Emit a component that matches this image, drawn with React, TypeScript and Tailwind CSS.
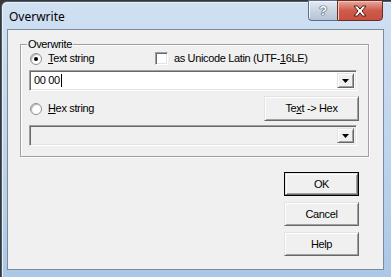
import type { ReactNode } from "react";

const raised =
  "border border-t-[#e3e3e3] border-l-[#e3e3e3] border-b-[#696969] border-r-[#696969] shadow-[inset_1px_1px_0_#fff,inset_-1px_-1px_0_#a0a0a0]";
const sunken =
  "border border-t-[#a0a0a0] border-l-[#a0a0a0] border-b-[#fff] border-r-[#fff] shadow-[inset_1px_1px_0_#696969,inset_-1px_-1px_0_#e3e3e3]";

function Arrow() {
  return (
    <div className={`flex h-full w-[17px] items-center justify-center bg-[#f0f0f0] ${raised}`}>
      <svg width="7" height="4" viewBox="0 0 7 4">
        <path d="M0 0h7L3.5 4z" fill="#000" />
      </svg>
    </div>
  );
}

function Combo({ disabled, children }: { disabled?: boolean; children?: ReactNode }) {
  return (
    <div
      className={`flex h-[21px] w-[328px] items-stretch p-[2px] ${sunken} ${disabled ? "bg-[#f0f0f0]" : "bg-white"}`}
    >
      <div className="flex flex-1 items-center pl-[2px]">{children}</div>
      <Arrow />
    </div>
  );
}

function Radio({ checked }: { checked?: boolean }) {
  return (
    <div className="flex h-[12px] w-[12px] items-center justify-center rounded-full border border-[#8e8f8f] bg-white shadow-[inset_1px_1px_1px_#b5b5b5]">
      {checked && <div className="h-[4px] w-[4px] rounded-full bg-black" />}
    </div>
  );
}

function Button({ children, def }: { children: ReactNode; def?: boolean }) {
  return (
    <div className={`h-[24px] w-[75px] ${def ? "border border-black" : ""}`}>
      <div className={`flex h-full w-full items-center justify-center bg-[#f0f0f0] ${raised}`}>{children}</div>
    </div>
  );
}

export default function App() {
  return (
    <div
      className="relative h-[277px] w-[391px] overflow-hidden bg-[#3a3632] text-[11px] leading-[13px] tracking-[-0.35px] text-black"
      style={{ fontFamily: '"Liberation Sans", Arial, sans-serif' }}
    >
      <div className="relative ml-[1px] mt-[1px] h-[290px] w-[400px] rounded-tl-[6px] border border-[#4d5c6c] bg-gradient-to-b from-[#cfe0f2] via-[#bed5ed] to-[#a9c6e6] shadow-[inset_1px_1px_0_#e8f1fa]">
        {/* title bar */}
        <div className="flex h-[27px] items-center pl-[7px] pt-[2px]">
          <span
            className="text-[12px] tracking-normal text-black"
            style={{ fontFamily: '"Noto Sans", "Open Sans", sans-serif' }}
          >
            Overwrite
          </span>
        </div>

        {/* caption buttons */}
        <div className="absolute left-[306px] top-[-2px] flex h-[21px]">
          <div className="flex w-[29px] items-center justify-center rounded-bl-[4px] border border-r-0 border-[#5d6f86] bg-gradient-to-b from-[#e4ebf3] via-[#c9d5e2] to-[#b3c2d3] shadow-[inset_1px_1px_0_#f3f7fb]">
            <span
              className="text-[13px] font-bold leading-none text-white"
              style={{
                fontFamily: '"Liberation Sans", sans-serif',
                textShadow: "0 0 1px #2c3b4d, 0 0 1px #2c3b4d, 0 0 1px #2c3b4d",
              }}
            >
              ?
            </span>
          </div>
          <div className="flex w-[46px] items-center justify-center rounded-br-[4px] border border-[#6a2b24] bg-gradient-to-b from-[#e6a89d] via-[#cf5b4b] to-[#c7503f] shadow-[inset_1px_1px_0_#f2c7be]">
            <svg width="14" height="12" viewBox="0 0 14 12">
              <path
                d="M1 1h3.5L7 4.2 9.5 1H13L9 6l4 5H9.5L7 7.8 4.5 11H1l4-5z"
                fill="#fff"
                stroke="#4a1c17"
                strokeWidth="1"
                strokeLinejoin="round"
              />
            </svg>
          </div>
        </div>

        {/* client area */}
        <div className="ml-[5px] h-[241px] w-[377px] border border-[#7d8a99] bg-[#f0f0f0]">
          <div className="flex flex-col pl-[12px] pt-[14px]">
            {/* group box */}
            <div className="relative h-[113px] w-[349px] border border-[#a0a0a0] shadow-[inset_1px_1px_0_#fff,1px_1px_0_#fff]">
              <span className="absolute left-[6px] top-[-7px] bg-[#f0f0f0] pl-[1px] pr-[1px]">Overwrite</span>
              <div className="flex flex-col pl-[8px] pt-[7px]">
                <div className="flex h-[13px] items-center">
                  <div className="flex w-[126px] items-center pl-[1px]">
                    <Radio checked />
                    <span className="ml-[6px]">
                      <span className="underline underline-offset-[1px]">T</span>ext string
                    </span>
                  </div>
                  <div className={`h-[13px] w-[13px] bg-white ${sunken}`} />
                  <span className="ml-[6px]">
                    as Unicode Latin (UTF-<span className="underline underline-offset-[1px]">1</span>6LE)
                  </span>
                </div>
                <div className="mt-[5px]">
                  <Combo>
                    <span>00 00</span>
                    <span className="ml-[1px] h-[13px] w-[1px] bg-black" />
                  </Combo>
                </div>
                <div className="mt-[5px] flex h-[25px] w-[330px] items-center">
                  <div className="pl-[1px]">
                    <Radio />
                  </div>
                  <span className="ml-[6px]">
                    <span className="underline underline-offset-[1px]">H</span>ex string
                  </span>
                  <div
                    className={`ml-auto flex h-[25px] w-[95px] items-center justify-center bg-[#f0f0f0] ${raised}`}
                  >
                    Te<span className="underline underline-offset-[1px]">x</span>t -&gt; Hex
                  </div>
                </div>
                <div className="mt-[4px]">
                  <Combo disabled />
                </div>
              </div>
            </div>

            {/* buttons */}
            <div className="ml-[264px] mt-[15px] flex flex-col gap-[6px]">
              <Button def>OK</Button>
              <Button>Cancel</Button>
              <Button>Help</Button>
            </div>
          </div>
        </div>
      </div>
    </div>
  );
}
